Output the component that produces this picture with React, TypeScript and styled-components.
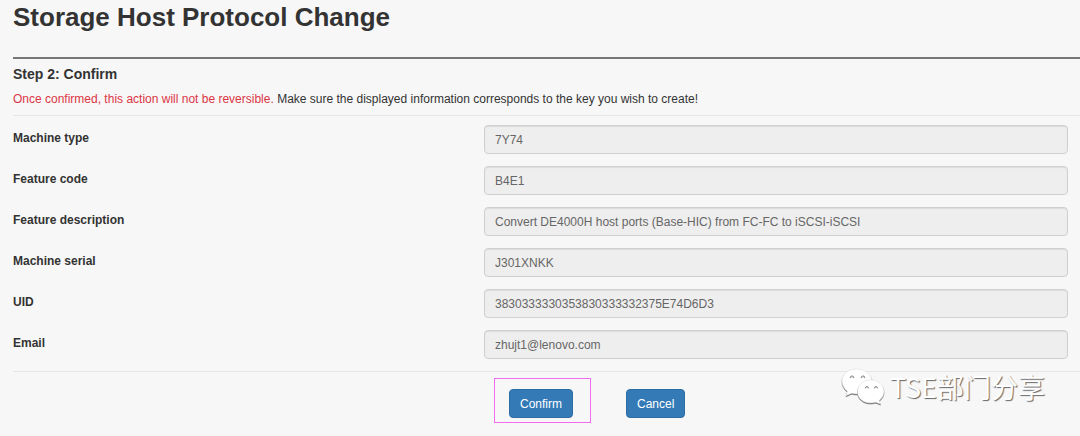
import React from "react";
import styled, { createGlobalStyle } from "styled-components";

const GlobalStyle = createGlobalStyle`
  *, *::before, *::after { box-sizing: border-box; }
  body {
    margin: 0;
    background: #f7f7f7;
    color: #333;
    font: 12px/18px "Liberation Sans", Arial, Helvetica, sans-serif;
  }
`;

const Page = styled.main`
  position: relative;
  padding: 0 0 12px 13px;
`;

const Title = styled.h1`
  margin: 0;
  padding-bottom: 23px;
  border-bottom: 2px solid #777;
  font-size: 26px;
  line-height: 34px;
`;

const StepTitle = styled.h2`
  margin: 6px 0 7px;
  font-size: 14px;
  line-height: 18px;
`;

const Notice = styled.p`
  margin: 0;
  padding-bottom: 7px;
  border-bottom: 1px solid #e6e6e6;
`;

const Warning = styled.span`
  color: #dc3545;
`;

const Fields = styled.div`
  display: flex;
  flex-direction: column;
  gap: 12px;
  padding: 9px 12px 12px 0;
  border-bottom: 1px solid #e6e6e6;
`;

const Field = styled.div`
  display: grid;
  grid-template-columns: 471px minmax(0, 1fr);
  align-items: start;
`;

const Label = styled.label`
  padding-top: 4px;
  font-weight: bold;
`;

const Input = styled.input`
  width: 100%;
  height: 29px;
  padding: 0 10px;
  border: 1px solid #d0d0d0;
  border-radius: 4px;
  background: #eee;
  box-shadow: inset 0 1px 1px rgba(0, 0, 0, 0.08);
  color: #666;
  font: inherit;
`;

const Actions = styled.div`
  display: flex;
  align-items: baseline;
  gap: 35px;
  padding: 6px 0 0 481px;
`;

const Highlight = styled.div`
  padding: 10px 17px 4px 14px;
  border: 1px solid #f26bf0;
`;

const Button = styled.button`
  height: 29px;
  padding: 0 10px;
  border: 1px solid #2e6da4;
  border-radius: 4px;
  background: #337ab7;
  color: #fff;
  font: inherit;
  cursor: pointer;
`;

const Watermark = styled.div`
  position: absolute;
  right: 35px;
  bottom: 28px;
  display: flex;
  align-items: center;
  gap: 5px;
  color: #fff;
  font: 27px/40px "Noto Sans CJK SC", sans-serif;
  text-shadow: 1px 1px 1px #666;
  pointer-events: none;
`;

const fields = [
  { id: "machine-type", label: "Machine type", value: "7Y74" },
  { id: "feature-code", label: "Feature code", value: "B4E1" },
  {
    id: "feature-description",
    label: "Feature description",
    value: "Convert DE4000H host ports (Base-HIC) from FC-FC to iSCSI-iSCSI",
  },
  { id: "machine-serial", label: "Machine serial", value: "J301XNKK" },
  { id: "uid", label: "UID", value: "3830333330353830333332375E74D6D3" },
  { id: "email", label: "Email", value: "zhujt1@lenovo.com" },
];

const Bubble = styled.path`
  fill: #fff;
  stroke: #ddd;
  stroke-width: 0.5;
  filter: drop-shadow(0 1px 0.7px #666);
`;

const ChatIcon = () => (
  <svg width="44" height="38" viewBox="0 0 44 38" aria-hidden="true">
    <Bubble d="M15.500 1C7 1 1 6.200 1 13c0 4.300 2.100 7.800 5.400 10.200L5 27.800l5.800-2.600c1.800.6 3.800.8 5.700.7C25 25.500 31 20.300 31 13.200 31 6.100 24.300 1 15.500 1Z" />
    <Bubble d="M29.500 12C22 12 16.500 17.300 16.500 23.700c0 6.600 5.800 11.300 13.200 11.300 1.800 0 3.400-.2 5-.8l4.800 1.900-1.300-3.700c3.100-2.300 4.800-5.100 4.800-8.800C43 17 37.200 12 29.500 12Z" />
    <g fill="#ddd" stroke="#888" strokeWidth="1" strokeLinecap="round">
      <path d="M9.200 9.700a1.800 1.800 0 1 1 3.600 0" />
      <path d="M20.200 9.700a1.800 1.800 0 1 1 3.600 0" />
      <path d="M24.400 20a1.500 1.500 0 1 1 3 0" />
      <path d="M33.400 20a1.500 1.500 0 1 1 3 0" />
    </g>
  </svg>
);

export default function App() {
  return (
    <>
      <GlobalStyle />
      <Page>
        <Title>Storage Host Protocol Change</Title>
        <StepTitle>Step 2: Confirm</StepTitle>
        <Notice>
          <Warning>Once confirmed, this action will not be reversible.</Warning> Make sure the
          displayed information corresponds to the key you wish to create!
        </Notice>
        <form onSubmit={(event) => event.preventDefault()}>
          <Fields>
            {fields.map(({ id, label, value }) => (
              <Field key={id}>
                <Label htmlFor={id}>{label}</Label>
                <Input id={id} value={value} disabled />
              </Field>
            ))}
          </Fields>
          <Actions>
            <Highlight>
              <Button type="submit">Confirm</Button>
            </Highlight>
            <Button type="button">Cancel</Button>
          </Actions>
        </form>
        <Watermark>
          <ChatIcon />
          <span>TSE部门分享</span>
        </Watermark>
      </Page>
    </>
  );
}
